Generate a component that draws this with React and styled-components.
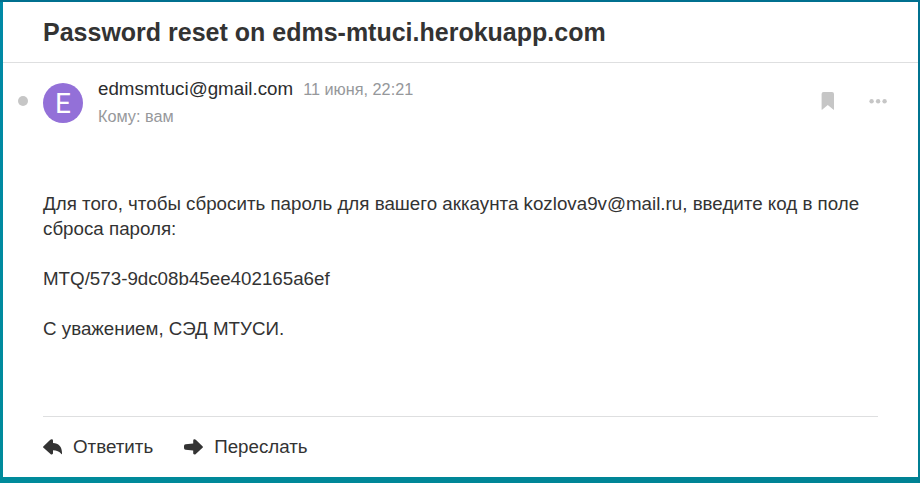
import React from "react";
import styled, { createGlobalStyle } from "styled-components";

const GlobalStyle = createGlobalStyle`
  * { box-sizing: border-box; }
  body { margin: 0; overflow: hidden; }
`;

const Desktop = styled.main`
  width: 920px;
  height: 483px;
  padding: 2px 2px 6px 3px;
  background:
    linear-gradient(#00708f, #00708f) top / 100% 2px no-repeat,
    linear-gradient(#00708f, #007f93) right / 2px 100% no-repeat,
    linear-gradient(90deg, #008b9b, #008294) bottom / 100% 6px no-repeat,
    linear-gradient(#0089a6, #008b9b);
  font-family: "Liberation Sans", Arial, sans-serif;
  color: #2c2d2e;
`;

const Letter = styled.article`
  display: flex;
  flex-direction: column;
  height: 475px;
  background: #fff;
`;

const Subject = styled.h1`
  flex: none;
  height: 61px;
  margin: 0;
  padding: 15px 40px 0;
  border-bottom: 1px solid #dedfe0;
  font-size: 25px;
  line-height: 30px;
  font-weight: 700;
  color: #333;
  white-space: nowrap;
`;

const Header = styled.header`
  display: flex;
  flex: none;
  align-items: flex-start;
  height: 65px;
  padding: 13px 30px 0 15px;
`;

const UnreadDot = styled.span`
  width: 10px;
  height: 10px;
  margin: 20px 15px 0 0;
  border-radius: 50%;
  background: #c6c6c6;
`;

const Avatar = styled.span`
  width: 40px;
  height: 40px;
  margin: 7px 15px 0 0;
  border-radius: 50%;
  background: #9370d8;
  color: #fff;
  font: 400 28px/41px Roboto, sans-serif;
  text-align: center;
`;

const Meta = styled.div`
  flex: 1;
`;

const SenderLine = styled.div`
  display: flex;
  align-items: baseline;
  gap: 10px;
  line-height: 25px;
`;

const Sender = styled.span`
  font-size: 18.75px;
`;

const Muted = styled.span`
  font-size: 16.25px;
  line-height: 20px;
  color: #96989b;
`;

const Recipient = styled(Muted)`
  display: block;
  margin-top: 5px;
`;

const Tools = styled.div`
  display: flex;
  align-items: center;
  gap: 34px;
  margin-top: 16px;
  color: #c6c6c6;

  svg { display: block; }
`;

const Body = styled.section`
  flex: none;
  height: 225px;
  margin-top: 63px;
  padding: 0 40px;
  font-size: 18.75px;
  line-height: 25px;
  color: #333;
`;

const Paragraph = styled.p`
  margin: 0 0 25px;
`;

const Footer = styled.footer`
  display: flex;
  flex: none;
  gap: 31px;
  height: 60px;
  margin: 0 40px;
  padding-top: 17px;
  border-top: 1px solid #dedfe0;
`;

const Action = styled.button`
  display: flex;
  align-items: center;
  gap: 11px;
  height: 25px;
  padding: 0;
  border: 0;
  background: none;
  color: #333;
  font: 18.75px/25px "Liberation Sans", Arial, sans-serif;
`;

const BookmarkIcon = () => (
  <svg width="14" height="18" viewBox="0 0 14 18" fill="currentColor">
    <path d="M2.5 0h8.5Q13 0 13 2v15.2q0 .9-.8.3L6.8 13 1.4 17.5q-.8.6-.8-.3V2Q.6 0 2.5 0Z" />
  </svg>
);

const MoreIcon = () => (
  <svg width="19" height="6" viewBox="0 0 19 6" fill="currentColor">
    <circle cx="2.6" cy="3.2" r="2.2" />
    <circle cx="9.1" cy="3.2" r="2.2" />
    <circle cx="15.6" cy="3.2" r="2.2" />
  </svg>
);

const ReplyIcon = () => (
  <svg width="19" height="16" viewBox="0 0 19 16" fill="currentColor">
    <path d="M.5 7.2 7.3.7Q8.2 0 9.2.3q.8.3.8 1.4v2.2c5.6 0 9 3.8 9 9.8v1.1q0 .7-.6.1c-2.2-2.5-4.7-3.7-8.4-3.7v2.7q0 1.1-.8 1.4-.9.4-1.7-.4L.5 8.8q-.9-.8 0-1.6Z" />
  </svg>
);

const ForwardIcon = () => (
  <svg width="19" height="16" viewBox="0 0 19 16" fill="currentColor">
    <path d="M18.5 7.2 11.8.7Q11 0 10 .3q-.8.3-.8 1.4v2.7L1.6 5.2Q0 5.4 0 6.9v2.2Q0 10.6 1.6 10.8l7.6.8v2.3q0 1.1.8 1.4.9.4 1.8-.4l6.7-6.1q.9-.8 0-1.6Z" />
  </svg>
);

export default function App() {
  return (
    <>
      <GlobalStyle />
      <Desktop>
        <Letter>
          <Subject>Password reset on edms-mtuci.herokuapp.com</Subject>
          <Header>
            <UnreadDot />
            <Avatar>E</Avatar>
            <Meta>
              <SenderLine>
                <Sender>edmsmtuci@gmail.com</Sender>
                <Muted>11 июня, 22:21</Muted>
              </SenderLine>
              <Recipient>Кому: вам</Recipient>
            </Meta>
            <Tools>
              <BookmarkIcon />
              <MoreIcon />
            </Tools>
          </Header>
          <Body>
            <Paragraph>
              Для того, чтобы сбросить пароль для вашего аккаунта kozlova9v@mail.ru, введите код в поле
              сброса пароля:
            </Paragraph>
            <Paragraph>MTQ/573-9dc08b45ee402165a6ef</Paragraph>
            <Paragraph>С уважением, СЭД МТУСИ.</Paragraph>
          </Body>
          <Footer>
            <Action><ReplyIcon />Ответить</Action>
            <Action><ForwardIcon />Переслать</Action>
          </Footer>
        </Letter>
      </Desktop>
    </>
  );
}
